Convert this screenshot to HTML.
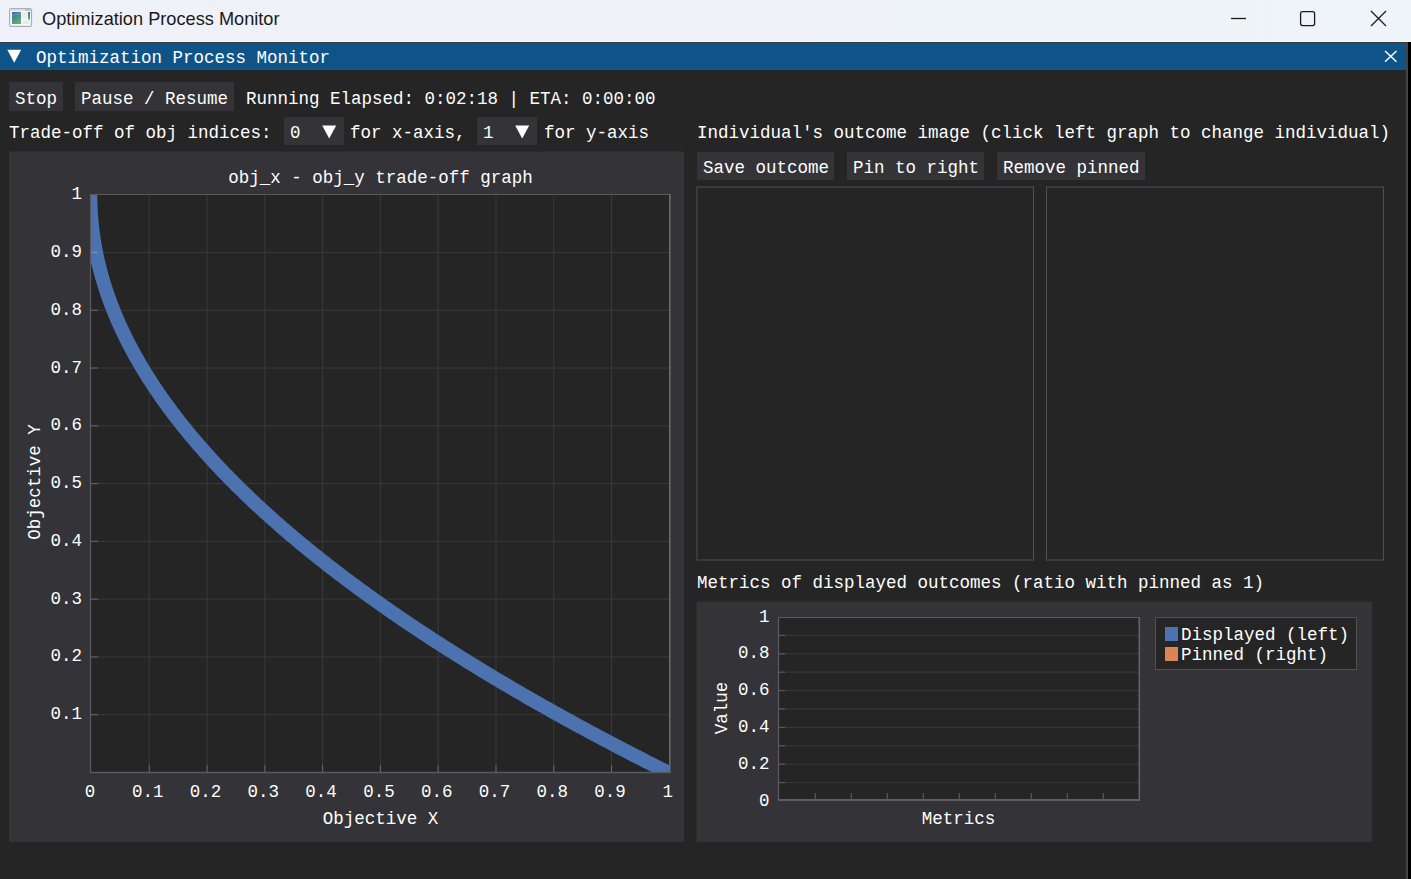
<!DOCTYPE html>
<html><head><meta charset="utf-8"><style>
html,body{margin:0;padding:0;width:1411px;height:879px;overflow:hidden;background:#252525;}
.r{position:absolute;}
.t{position:absolute;font-family:"Liberation Mono",monospace;font-size:17.5px;line-height:20px;white-space:pre;color:#fff;}
</style></head><body>
<div class="r" style="left:0px;top:0px;width:1411px;height:41px;background:linear-gradient(90deg,#eff1fa 0%,#eff2f9 35%,#eef3f8 65%,#eef4f7 100%);"></div>
<div class="r" style="left:0px;top:41px;width:1411px;height:1px;background:#f8fafd;"></div>
<div class="r" style="left:0px;top:42px;width:1411px;height:1px;background:#333a40;"></div>
<div class="r" style="left:0px;top:43px;width:1406px;height:836px;background:#252525;"></div>
<div class="r" style="left:1406px;top:43px;width:2px;height:836px;background:#444448;"></div>
<div class="r" style="left:1408px;top:42px;width:3px;height:837px;background:#000;"></div>
<div class="r" style="left:0px;top:43px;width:1406px;height:27px;background:#0f5489;"></div>
<div class="r" style="left:9px;top:82px;width:54px;height:29px;background:#333338;"></div>
<div class="r" style="left:75px;top:82px;width:159px;height:29px;background:#333338;"></div>
<div class="r" style="left:284px;top:117px;width:60px;height:28px;background:#333338;"></div>
<div class="r" style="left:477px;top:117px;width:60px;height:28px;background:#333338;"></div>
<div class="r" style="left:697px;top:152px;width:137px;height:28px;background:#333338;"></div>
<div class="r" style="left:847px;top:152px;width:137px;height:28px;background:#333338;"></div>
<div class="r" style="left:997px;top:152px;width:148px;height:28px;background:#333338;"></div>
<svg class="r" style="left:0;top:0" width="1411" height="879" viewBox="0 0 1411 879">
<rect x="9" y="151.5" width="675" height="690.5" fill="#333338"/>
<rect x="90" y="194" width="580" height="579" fill="#252525"/>
<defs><clipPath id="pc"><rect x="91" y="195" width="578.5" height="577"/></clipPath></defs>
<line x1="149.28" y1="195" x2="149.28" y2="772" stroke="#3a3a3c" stroke-width="1"/>
<line x1="91" y1="714.72" x2="669" y2="714.72" stroke="#3a3a3c" stroke-width="1"/>
<line x1="207.06" y1="195" x2="207.06" y2="772" stroke="#3a3a3c" stroke-width="1"/>
<line x1="91" y1="656.94" x2="669" y2="656.94" stroke="#3a3a3c" stroke-width="1"/>
<line x1="264.84" y1="195" x2="264.84" y2="772" stroke="#3a3a3c" stroke-width="1"/>
<line x1="91" y1="599.16" x2="669" y2="599.16" stroke="#3a3a3c" stroke-width="1"/>
<line x1="322.62" y1="195" x2="322.62" y2="772" stroke="#3a3a3c" stroke-width="1"/>
<line x1="91" y1="541.38" x2="669" y2="541.38" stroke="#3a3a3c" stroke-width="1"/>
<line x1="380.40" y1="195" x2="380.40" y2="772" stroke="#3a3a3c" stroke-width="1"/>
<line x1="91" y1="483.60" x2="669" y2="483.60" stroke="#3a3a3c" stroke-width="1"/>
<line x1="438.18" y1="195" x2="438.18" y2="772" stroke="#3a3a3c" stroke-width="1"/>
<line x1="91" y1="425.82" x2="669" y2="425.82" stroke="#3a3a3c" stroke-width="1"/>
<line x1="495.96" y1="195" x2="495.96" y2="772" stroke="#3a3a3c" stroke-width="1"/>
<line x1="91" y1="368.04" x2="669" y2="368.04" stroke="#3a3a3c" stroke-width="1"/>
<line x1="553.74" y1="195" x2="553.74" y2="772" stroke="#3a3a3c" stroke-width="1"/>
<line x1="91" y1="310.26" x2="669" y2="310.26" stroke="#3a3a3c" stroke-width="1"/>
<line x1="611.52" y1="195" x2="611.52" y2="772" stroke="#3a3a3c" stroke-width="1"/>
<line x1="91" y1="252.48" x2="669" y2="252.48" stroke="#3a3a3c" stroke-width="1"/>
<polyline clip-path="url(#pc)" points="90.30,194.70 90.31,196.63 90.33,198.55 90.36,200.48 90.40,202.40 90.46,204.33 90.53,206.26 90.61,208.18 90.71,210.11 90.82,212.03 90.94,213.96 91.08,215.89 91.22,217.81 91.38,219.74 91.56,221.66 91.74,223.59 91.94,225.52 92.16,227.44 92.38,229.37 92.62,231.29 92.87,233.22 93.13,235.15 93.41,237.07 93.70,239.00 94.00,240.92 94.31,242.85 94.64,244.78 94.98,246.70 95.33,248.63 95.70,250.55 96.08,252.48 96.47,254.41 96.87,256.33 97.29,258.26 97.72,260.18 98.16,262.11 98.62,264.04 99.09,265.96 99.57,267.89 100.06,269.81 100.57,271.74 101.09,273.67 101.62,275.59 102.17,277.52 102.73,279.44 103.30,281.37 103.88,283.30 104.48,285.22 105.09,287.15 105.71,289.07 106.35,291.00 107.00,292.93 107.66,294.85 108.33,296.78 109.02,298.70 109.72,300.63 110.43,302.56 111.16,304.48 111.90,306.41 112.65,308.33 113.41,310.26 114.19,312.19 114.98,314.11 115.78,316.04 116.60,317.96 117.42,319.89 118.27,321.82 119.12,323.74 119.99,325.67 120.87,327.59 121.76,329.52 122.66,331.45 123.58,333.37 124.51,335.30 125.46,337.22 126.41,339.15 127.38,341.08 128.36,343.00 129.36,344.93 130.37,346.85 131.39,348.78 132.42,350.71 133.47,352.63 134.53,354.56 135.60,356.48 136.68,358.41 137.78,360.34 138.89,362.26 140.02,364.19 141.15,366.11 142.30,368.04 143.46,369.97 144.64,371.89 145.83,373.82 147.03,375.74 148.24,377.67 149.47,379.60 150.71,381.52 151.96,383.45 153.22,385.37 154.50,387.30 155.79,389.23 157.09,391.15 158.41,393.08 159.74,395.00 161.08,396.93 162.44,398.86 163.80,400.78 165.18,402.71 166.58,404.63 167.98,406.56 169.40,408.49 170.83,410.41 172.28,412.34 173.73,414.26 175.20,416.19 176.69,418.12 178.18,420.04 179.69,421.97 181.21,423.89 182.75,425.82 184.30,427.75 185.86,429.67 187.43,431.60 189.01,433.52 190.61,435.45 192.22,437.38 193.85,439.30 195.49,441.23 197.14,443.15 198.80,445.08 200.47,447.01 202.16,448.93 203.86,450.86 205.58,452.78 207.30,454.71 209.04,456.64 210.80,458.56 212.56,460.49 214.34,462.41 216.13,464.34 217.94,466.27 219.75,468.19 221.58,470.12 223.43,472.04 225.28,473.97 227.15,475.90 229.03,477.82 230.92,479.75 232.83,481.67 234.75,483.60 236.68,485.53 238.63,487.45 240.59,489.38 242.56,491.30 244.54,493.23 246.54,495.16 248.55,497.08 250.57,499.01 252.60,500.93 254.65,502.86 256.71,504.79 258.79,506.71 260.87,508.64 262.97,510.56 265.08,512.49 267.21,514.42 269.35,516.34 271.50,518.27 273.66,520.19 275.84,522.12 278.03,524.05 280.23,525.97 282.44,527.90 284.67,529.82 286.91,531.75 289.17,533.68 291.43,535.60 293.71,537.53 296.00,539.45 298.31,541.38 300.63,543.31 302.96,545.23 305.30,547.16 307.66,549.08 310.02,551.01 312.41,552.94 314.80,554.86 317.21,556.79 319.63,558.71 322.06,560.64 324.51,562.57 326.97,564.49 329.44,566.42 331.92,568.34 334.42,570.27 336.93,572.20 339.45,574.12 341.99,576.05 344.54,577.97 347.10,579.90 349.67,581.83 352.26,583.75 354.86,585.68 357.47,587.60 360.10,589.53 362.74,591.46 365.39,593.38 368.05,595.31 370.73,597.23 373.42,599.16 376.12,601.09 378.84,603.01 381.57,604.94 384.31,606.86 387.06,608.79 389.83,610.72 392.61,612.64 395.40,614.57 398.21,616.49 401.03,618.42 403.86,620.35 406.70,622.27 409.56,624.20 412.43,626.12 415.31,628.05 418.21,629.98 421.12,631.90 424.04,633.83 426.97,635.75 429.92,637.68 432.88,639.61 435.85,641.53 438.84,643.46 441.83,645.38 444.84,647.31 447.87,649.24 450.90,651.16 453.95,653.09 457.02,655.01 460.09,656.94 463.18,658.87 466.28,660.79 469.39,662.72 472.52,664.64 475.66,666.57 478.81,668.50 481.98,670.42 485.16,672.35 488.35,674.27 491.55,676.20 494.77,678.13 498.00,680.05 501.24,681.98 504.49,683.90 507.76,685.83 511.04,687.76 514.33,689.68 517.64,691.61 520.96,693.53 524.29,695.46 527.64,697.39 530.99,699.31 534.36,701.24 537.75,703.16 541.14,705.09 544.55,707.02 547.98,708.94 551.41,710.87 554.86,712.79 558.32,714.72 561.79,716.65 565.28,718.57 568.78,720.50 572.29,722.42 575.81,724.35 579.35,726.28 582.90,728.20 586.46,730.13 590.04,732.05 593.63,733.98 597.23,735.91 600.84,737.83 604.47,739.76 608.11,741.68 611.76,743.61 615.43,745.54 619.11,747.46 622.80,749.39 626.50,751.31 630.22,753.24 633.95,755.17 637.69,757.09 641.45,759.02 645.22,760.94 649.00,762.87 652.79,764.80 656.60,766.72 660.42,768.65 664.25,770.57 668.10,772.50" fill="none" stroke="#4c72b0" stroke-width="14" stroke-linejoin="round"/>
<line x1="149.28" y1="765" x2="149.28" y2="772" stroke="rgba(255,255,255,0.21)" stroke-width="1.3"/>
<line x1="91" y1="714.72" x2="98" y2="714.72" stroke="rgba(255,255,255,0.21)" stroke-width="1.3"/>
<line x1="207.06" y1="765" x2="207.06" y2="772" stroke="rgba(255,255,255,0.21)" stroke-width="1.3"/>
<line x1="91" y1="656.94" x2="98" y2="656.94" stroke="rgba(255,255,255,0.21)" stroke-width="1.3"/>
<line x1="264.84" y1="765" x2="264.84" y2="772" stroke="rgba(255,255,255,0.21)" stroke-width="1.3"/>
<line x1="91" y1="599.16" x2="98" y2="599.16" stroke="rgba(255,255,255,0.21)" stroke-width="1.3"/>
<line x1="322.62" y1="765" x2="322.62" y2="772" stroke="rgba(255,255,255,0.21)" stroke-width="1.3"/>
<line x1="91" y1="541.38" x2="98" y2="541.38" stroke="rgba(255,255,255,0.21)" stroke-width="1.3"/>
<line x1="380.40" y1="765" x2="380.40" y2="772" stroke="rgba(255,255,255,0.21)" stroke-width="1.3"/>
<line x1="91" y1="483.60" x2="98" y2="483.60" stroke="rgba(255,255,255,0.21)" stroke-width="1.3"/>
<line x1="438.18" y1="765" x2="438.18" y2="772" stroke="rgba(255,255,255,0.21)" stroke-width="1.3"/>
<line x1="91" y1="425.82" x2="98" y2="425.82" stroke="rgba(255,255,255,0.21)" stroke-width="1.3"/>
<line x1="495.96" y1="765" x2="495.96" y2="772" stroke="rgba(255,255,255,0.21)" stroke-width="1.3"/>
<line x1="91" y1="368.04" x2="98" y2="368.04" stroke="rgba(255,255,255,0.21)" stroke-width="1.3"/>
<line x1="553.74" y1="765" x2="553.74" y2="772" stroke="rgba(255,255,255,0.21)" stroke-width="1.3"/>
<line x1="91" y1="310.26" x2="98" y2="310.26" stroke="rgba(255,255,255,0.21)" stroke-width="1.3"/>
<line x1="611.52" y1="765" x2="611.52" y2="772" stroke="rgba(255,255,255,0.21)" stroke-width="1.3"/>
<line x1="91" y1="252.48" x2="98" y2="252.48" stroke="rgba(255,255,255,0.21)" stroke-width="1.3"/>
<line x1="90" y1="194.5" x2="670.5" y2="194.5" stroke="#5a5a5e" stroke-width="1"/>
<line x1="90.5" y1="194" x2="90.5" y2="773" stroke="#5a5a5e" stroke-width="1.2"/>
<line x1="90" y1="772.5" x2="670" y2="772.5" stroke="#5a5a5e" stroke-width="1.4"/>
<line x1="669.8" y1="194" x2="669.8" y2="773" stroke="#6a6a6c" stroke-width="1.6"/>
<rect x="697" y="187" width="336.5" height="373" fill="none" stroke="#505054" stroke-width="1"/>
<rect x="1046.5" y="187" width="337" height="373" fill="none" stroke="#505054" stroke-width="1"/>
<rect x="696.5" y="601.5" width="675.4" height="240.5" fill="#333338"/>
<rect x="778" y="617" width="361" height="184" fill="#252525"/>
<line x1="778" y1="782.60" x2="1139" y2="782.60" stroke="#3a3a3c" stroke-width="1"/>
<line x1="778" y1="782.60" x2="785" y2="782.60" stroke="#56565a" stroke-width="1.3"/>
<line x1="778" y1="764.20" x2="1139" y2="764.20" stroke="#3a3a3c" stroke-width="1"/>
<line x1="778" y1="764.20" x2="785" y2="764.20" stroke="#56565a" stroke-width="1.3"/>
<line x1="778" y1="745.80" x2="1139" y2="745.80" stroke="#3a3a3c" stroke-width="1"/>
<line x1="778" y1="745.80" x2="785" y2="745.80" stroke="#56565a" stroke-width="1.3"/>
<line x1="778" y1="727.40" x2="1139" y2="727.40" stroke="#3a3a3c" stroke-width="1"/>
<line x1="778" y1="727.40" x2="785" y2="727.40" stroke="#56565a" stroke-width="1.3"/>
<line x1="778" y1="709.00" x2="1139" y2="709.00" stroke="#3a3a3c" stroke-width="1"/>
<line x1="778" y1="709.00" x2="785" y2="709.00" stroke="#56565a" stroke-width="1.3"/>
<line x1="778" y1="690.60" x2="1139" y2="690.60" stroke="#3a3a3c" stroke-width="1"/>
<line x1="778" y1="690.60" x2="785" y2="690.60" stroke="#56565a" stroke-width="1.3"/>
<line x1="778" y1="672.20" x2="1139" y2="672.20" stroke="#3a3a3c" stroke-width="1"/>
<line x1="778" y1="672.20" x2="785" y2="672.20" stroke="#56565a" stroke-width="1.3"/>
<line x1="778" y1="653.80" x2="1139" y2="653.80" stroke="#3a3a3c" stroke-width="1"/>
<line x1="778" y1="653.80" x2="785" y2="653.80" stroke="#56565a" stroke-width="1.3"/>
<line x1="778" y1="635.40" x2="1139" y2="635.40" stroke="#3a3a3c" stroke-width="1"/>
<line x1="778" y1="635.40" x2="785" y2="635.40" stroke="#56565a" stroke-width="1.3"/>
<line x1="815.30" y1="793" x2="815.30" y2="801" stroke="#56565a" stroke-width="1.3"/>
<line x1="851.30" y1="793" x2="851.30" y2="801" stroke="#56565a" stroke-width="1.3"/>
<line x1="887.30" y1="793" x2="887.30" y2="801" stroke="#56565a" stroke-width="1.3"/>
<line x1="923.30" y1="793" x2="923.30" y2="801" stroke="#56565a" stroke-width="1.3"/>
<line x1="959.30" y1="793" x2="959.30" y2="801" stroke="#56565a" stroke-width="1.3"/>
<line x1="995.30" y1="793" x2="995.30" y2="801" stroke="#56565a" stroke-width="1.3"/>
<line x1="1031.30" y1="793" x2="1031.30" y2="801" stroke="#56565a" stroke-width="1.3"/>
<line x1="1067.30" y1="793" x2="1067.30" y2="801" stroke="#56565a" stroke-width="1.3"/>
<line x1="1103.30" y1="793" x2="1103.30" y2="801" stroke="#56565a" stroke-width="1.3"/>
<line x1="778" y1="617.5" x2="1140" y2="617.5" stroke="#5a5a5e" stroke-width="1"/>
<line x1="778.5" y1="617" x2="778.5" y2="801" stroke="#5a5a5e" stroke-width="1.2"/>
<line x1="778" y1="800" x2="1140" y2="800" stroke="#5e5e60" stroke-width="2"/>
<line x1="1139.3" y1="617" x2="1139.3" y2="801" stroke="#626264" stroke-width="1.6"/>
</svg>
<svg class="r" style="left:9px;top:8px" width="24" height="20" viewBox="0 0 24 20">
<defs><linearGradient id="ig" x1="0" y1="0" x2="0.6" y2="1"><stop offset="0" stop-color="#3b68ad"/><stop offset="0.45" stop-color="#468a94"/><stop offset="1" stop-color="#5cb46a"/></linearGradient>
<linearGradient id="ig2" x1="0" y1="0" x2="0" y2="1"><stop offset="0" stop-color="#3b68ad"/><stop offset="1" stop-color="#62b86a"/></linearGradient></defs>
<rect x="0.6" y="0.6" width="21.9" height="17.8" rx="1.6" fill="#fbfbfc" stroke="#a9aeb6" stroke-width="1.2"/>
<rect x="1.2" y="1.2" width="20.7" height="1.8" fill="#d9dde4"/>
<rect x="16" y="1.2" width="5.9" height="1.8" fill="#b7c0ce"/>
<rect x="3" y="4" width="9" height="12" fill="url(#ig)"/>
<path d="M3 7.5 Q6 5.6 12 5.9" stroke="#9cc0d0" stroke-width="0.6" fill="none" opacity="0.7"/>
<rect x="13.4" y="4" width="4.6" height="6.8" fill="#ebebec"/>
<rect x="19" y="4" width="2" height="7.7" fill="url(#ig2)"/>
<rect x="13.4" y="12.2" width="7.6" height="3.8" fill="#e9e9ea"/>
</svg>
<div class="t" style="left:42px;top:7px;font-family:'Liberation Sans',sans-serif;font-size:18.2px;line-height:24px;color:#1a1a1a">Optimization Process Monitor</div>
<svg class="r" style="left:1220px;top:0px" width="180" height="40" viewBox="0 0 180 40">
<line x1="11" y1="18.5" x2="26" y2="18.5" stroke="#1a1a1a" stroke-width="1.3"/>
<rect x="80.6" y="11.6" width="14" height="14" rx="2" fill="none" stroke="#1a1a1a" stroke-width="1.3"/>
<path d="M151 11 L166 26 M166 11 L151 26" stroke="#1a1a1a" stroke-width="1.3" fill="none"/>
</svg>
<svg class="r" style="left:7px;top:49px" width="16" height="15" viewBox="0 0 16 15"><path d="M0.3 0.8 L14.2 0.8 L7.25 13.8 Z" fill="#fff"/></svg>
<div class="t" style="left:36px;top:48px;">Optimization Process Monitor</div>
<svg class="r" style="left:1382px;top:49px" width="16" height="16" viewBox="0 0 16 16"><path d="M3 2 L14.5 12.8 M14.5 2 L3 12.8" stroke="#fff" stroke-width="1.5"/></svg>
<div class="t" style="left:15px;top:89px;">Stop</div>
<div class="t" style="left:81px;top:89px;">Pause / Resume</div>
<div class="t" style="left:246px;top:89px;">Running Elapsed: 0:02:18 | ETA: 0:00:00</div>
<div class="t" style="left:9px;top:123px;">Trade-off of obj indices:</div>
<div class="t" style="left:290px;top:123px;">0</div>
<svg class="r" style="left:322px;top:124.5px" width="15" height="14" viewBox="0 0 15 14"><path d="M0.2 0.6 L14.2 0.6 L7.2 13.4 Z" fill="#fff"/></svg>
<div class="t" style="left:350px;top:123px;">for x-axis,</div>
<div class="t" style="left:483px;top:123px;">1</div>
<svg class="r" style="left:515px;top:124.5px" width="15" height="14" viewBox="0 0 15 14"><path d="M0.2 0.6 L14.2 0.6 L7.2 13.4 Z" fill="#fff"/></svg>
<div class="t" style="left:544px;top:123px;">for y-axis</div>
<div class="t" style="left:697px;top:123px;">Individual's outcome image (click left graph to change individual)</div>
<div class="t" style="left:228.15px;top:168px;">obj_x - obj_y trade-off graph</div>
<div class="t" style="left:84.75px;top:782px;">0</div>
<div class="t" style="left:132.03px;top:782px;">0.1</div>
<div class="t" style="left:189.81px;top:782px;">0.2</div>
<div class="t" style="left:247.59px;top:782px;">0.3</div>
<div class="t" style="left:305.37px;top:782px;">0.4</div>
<div class="t" style="left:363.15px;top:782px;">0.5</div>
<div class="t" style="left:420.93px;top:782px;">0.6</div>
<div class="t" style="left:478.71px;top:782px;">0.7</div>
<div class="t" style="left:536.49px;top:782px;">0.8</div>
<div class="t" style="left:594.27px;top:782px;">0.9</div>
<div class="t" style="left:662.55px;top:782px;">1</div>
<div class="t" style="left:50.5px;top:704.22px;">0.1</div>
<div class="t" style="left:50.5px;top:646.44px;">0.2</div>
<div class="t" style="left:50.5px;top:588.66px;">0.3</div>
<div class="t" style="left:50.5px;top:530.88px;">0.4</div>
<div class="t" style="left:50.5px;top:473.1px;">0.5</div>
<div class="t" style="left:50.5px;top:415.32px;">0.6</div>
<div class="t" style="left:50.5px;top:357.54px;">0.7</div>
<div class="t" style="left:50.5px;top:299.76px;">0.8</div>
<div class="t" style="left:50.5px;top:241.98px;">0.9</div>
<div class="t" style="left:71.5px;top:184.2px;">1</div>
<div class="t" style="left:322.65px;top:809px;">Objective X</div>
<div class="t" style="left:-23.25px;top:472px;width:115.5px;transform:rotate(-90deg);transform-origin:57.75px 10px;">Objective Y</div>
<div class="t" style="left:703px;top:158px;">Save outcome</div>
<div class="t" style="left:853px;top:158px;">Pin to right</div>
<div class="t" style="left:1003px;top:158px;">Remove pinned</div>
<div class="t" style="left:697px;top:573px;">Metrics of displayed outcomes (ratio with pinned as 1)</div>
<div class="t" style="left:759px;top:790.5px;">0</div>
<div class="t" style="left:738px;top:753.7px;">0.2</div>
<div class="t" style="left:738px;top:716.9px;">0.4</div>
<div class="t" style="left:738px;top:680.1px;">0.6</div>
<div class="t" style="left:738px;top:643.3px;">0.8</div>
<div class="t" style="left:759px;top:606.5px;">1</div>
<div class="t" style="left:921.75px;top:809px;">Metrics</div>
<div class="t" style="left:695.75px;top:698px;width:52.5px;transform:rotate(-90deg);transform-origin:26.25px 10px;">Value</div>
<div class="r" style="left:1155px;top:617px;width:202px;height:53px;background:#252525;box-sizing:border-box;border:1px solid #505054;"></div>
<div class="r" style="left:1165px;top:627px;width:13px;height:14px;background:#4c72b0"></div>
<div class="r" style="left:1165px;top:647px;width:13px;height:14px;background:#dd8452"></div>
<div class="t" style="left:1181px;top:625px;">Displayed (left)</div>
<div class="t" style="left:1181px;top:645px;">Pinned (right)</div>
</body></html>
